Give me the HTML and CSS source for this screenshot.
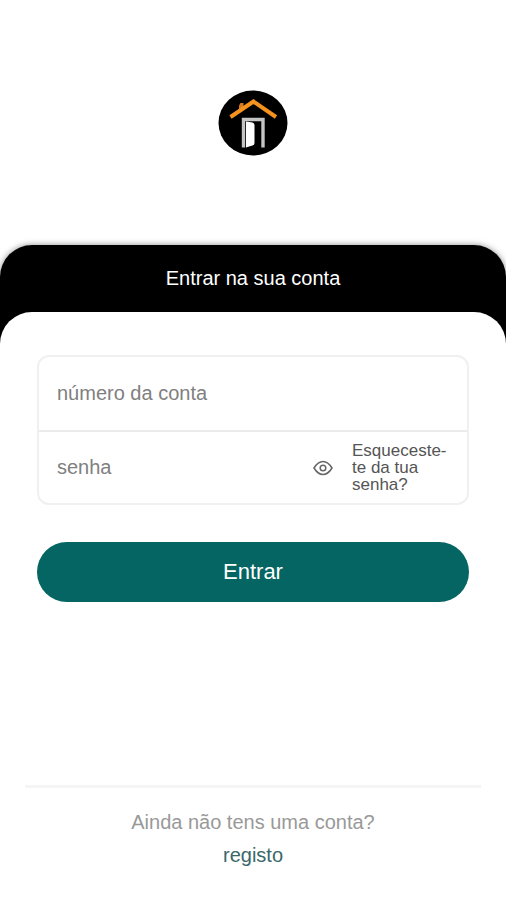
FILE: index.html
```html
<!DOCTYPE html>
<html lang="pt">
<head>
<meta charset="utf-8">
<meta name="viewport" content="width=device-width, initial-scale=1">
<title>Entrar na sua conta</title>
<link rel="stylesheet" href="styles.css">
</head>
<body>
<header class="brand">
  <svg class="logo" viewBox="0 0 70 66" role="img" aria-label="Logótipo">
    <ellipse cx="35" cy="33" rx="34.5" ry="32.5" fill="#000"/>
    <path d="M21 20.500V15.500L22.500 13H25.500V18L21 21.500Z" fill="#d9791c"/>
    <path d="M12.500 27L35.500 11.500L58 27" fill="none" stroke="#f5921e" stroke-width="4"/>
    <path d="M25.500 57.500V29.500H45V57.500" fill="none" stroke="#c4c4c4" stroke-width="3.4"/>
    <path d="M28 31.500L34.500 32.500Q36.500 33 36.500 35V53Q36.500 55 34.500 55.500L28 57.500Z" fill="#fff"/>
  </svg>
</header>
<main class="sheet">
  <h1 class="sheet-title">Entrar na sua conta</h1>
  <div class="panel">
    <form class="login">
      <div class="fields">
        <div class="field">
          <input class="field-input" type="text" placeholder="número da conta" aria-label="número da conta">
        </div>
        <div class="field">
          <input class="field-input" type="password" placeholder="senha" aria-label="senha">
          <button class="reveal" type="button" aria-label="Mostrar senha">
            <svg class="eye" viewBox="0 0 20 16" aria-hidden="true">
              <path d="M1 8Q5 1.500 10 1.500T19 8Q15 14.500 10 14.500T1 8Z"/>
              <circle cx="10" cy="8" r="2.800"/>
            </svg>
          </button>
          <a class="forgot" href="#">Esqueceste-te da tua senha?</a>
        </div>
      </div>
      <button class="submit" type="submit">Entrar</button>
    </form>
    <footer class="signup">
      <p class="signup-text">Ainda não tens uma conta?</p>
      <a class="signup-link" href="#">registo</a>
    </footer>
  </div>
</main>
</body>
</html>
```
FILE: styles.css
```css
* {
  box-sizing: border-box;
}

body {
  margin: 0;
  min-height: 100vh;
  display: flex;
  flex-direction: column;
  background: #fff;
  font-family: "Liberation Sans", Arial, sans-serif;
  font-size: 20px;
}

.brand {
  display: flex;
  justify-content: center;
  padding: 90px 0 89px;
}

.logo {
  width: 70px;
  height: 66px;
}

.sheet {
  flex: 1;
  display: flex;
  flex-direction: column;
  border-radius: 32px 32px 0 0;
  background: linear-gradient(#000 100px, #fff 100px);
  box-shadow: 0 0 6px rgba(0, 0, 0, 0.45);
}

.sheet-title {
  margin: 0;
  color: #fff;
  font-size: 20px;
  font-weight: 400;
  line-height: 67px;
  text-align: center;
}

.panel {
  flex: 1;
  display: flex;
  flex-direction: column;
  justify-content: space-between;
  padding: 43px 25px 28px;
  border-radius: 32px 32px 0 0;
  background: #fff;
}

.login {
  padding: 0 12px;
}

.fields {
  border: 2px solid #f0f0f0;
  border-radius: 12px;
}

.field {
  display: flex;
  align-items: center;
  height: 73px;
  padding: 0 18px;
}

.field + .field {
  border-top: 2px solid #ebebeb;
}

.field-input {
  flex: 1;
  min-width: 0;
  padding: 0;
  border: 0;
  outline: 0;
  background: none;
  color: #333;
  font: inherit;
}

.field-input::placeholder {
  color: #808080;
  opacity: 1;
}

.reveal {
  display: flex;
  padding: 0;
  border: 0;
  background: none;
}

.eye {
  width: 20px;
  height: 16px;
  fill: none;
  stroke: #666;
  stroke-width: 1.5;
}

.forgot {
  width: 97px;
  margin-left: 19px;
  color: #555;
  font-size: 17px;
  line-height: 17px;
  text-decoration: none;
}

.submit {
  display: block;
  width: 100%;
  height: 60px;
  margin-top: 37px;
  border: 0;
  border-radius: 30px;
  background: #046562;
  color: #fff;
  font: inherit;
  font-size: 22px;
}

.signup {
  display: flex;
  flex-direction: column;
  align-items: center;
  padding-top: 18px;
  border-top: 3px solid #f5f5f5;
  line-height: 33px;
}

.signup-text {
  margin: 0;
  color: #999;
}

.signup-link {
  color: #39686a;
  text-decoration: none;
}
```
